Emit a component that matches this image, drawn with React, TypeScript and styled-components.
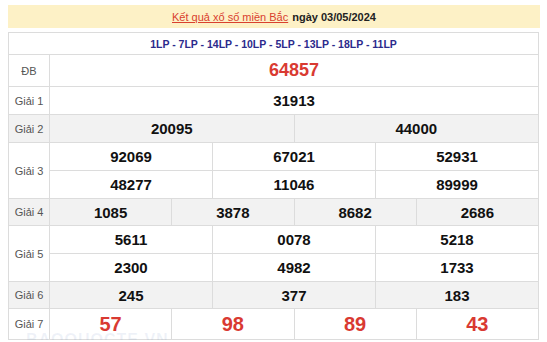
import styled, { createGlobalStyle } from 'styled-components'

const GlobalStyle = createGlobalStyle`
  body {
    margin: 0;
    padding: 5px 7px 0 8px;
    background: #fff;
    font-family: Arial, "Liberation Sans", sans-serif;
    overflow: hidden;
  }
`

const Page = styled.div`
  position: relative;
  display: flex;
  flex-direction: column;
  gap: 4px;
`

const Banner = styled.div`
  height: 23px;
  display: flex;
  align-items: center;
  justify-content: center;
  gap: 4px;
  background: #fdf1c6;
  font-size: 11px;
  color: #111;
`

const BannerLink = styled.a`
  color: #d9402e;
  text-decoration: underline;
`

const BannerDate = styled.span`
  font-weight: 700;
  color: #222;
`

const Table = styled.table`
  width: 531px;
  border-collapse: collapse;
  table-layout: fixed;
  border: 1px solid #d6d6d6;
`

const Row = styled.tr<{ $shade?: boolean; $h?: number }>`
  height: ${(p) => p.$h ?? 28}px;
  background: ${(p) => (p.$shade ? '#f2f2f2' : '#fff')};
`

const Cell = styled.td`
  border: 1px solid #dcdcdc;
  padding: 0;
  text-align: center;
  vertical-align: middle;
`

const Label = styled(Cell)`
  width: 40px;
  font-size: 11px;
  color: #555;
`

const Codes = styled(Cell)`
  font-size: 10.5px;
  font-weight: 700;
  color: #2b2a8c;
`

const Num = styled(Cell)<{ $red?: boolean; $size?: number }>`
  font-size: ${(p) => p.$size ?? 15}px;
  font-weight: 700;
  color: ${(p) => (p.$red ? '#d93a32' : '#111')};
`

const Watermark = styled.div`
  position: absolute;
  left: 18px;
  bottom: -9px;
  font-size: 16px;
  font-weight: 700;
  letter-spacing: 1px;
  color: rgba(120, 150, 200, 0.12);
  pointer-events: none;
`

type Line = { label: string; rows: string[][]; shade?: boolean; red?: boolean; size?: number; h?: number }

const prizes: Line[] = [
  { label: 'ĐB', rows: [['64857']], red: true, size: 18, h: 32 },
  { label: 'Giải 1', rows: [['31913']] },
  { label: 'Giải 2', rows: [['20095', '44000']], shade: true },
  { label: 'Giải 3', rows: [['92069', '67021', '52931'], ['48277', '11046', '89999']], h: 28 },
  { label: 'Giải 4', rows: [['1085', '3878', '8682', '2686']], shade: true, h: 27 },
  { label: 'Giải 5', rows: [['5611', '0078', '5218'], ['2300', '4982', '1733']], h: 28 },
  { label: 'Giải 6', rows: [['245', '377', '183']], shade: true, h: 27 },
  { label: 'Giải 7', rows: [['57', '98', '89', '43']], red: true, size: 20, h: 31 },
]

// 12 equal slots so 1, 2, 3 and 4 columns all share a grid
const span = (n: number) => 12 / n

export default function App() {
  return (
    <Page>
      <GlobalStyle />
      <Banner>
        <BannerLink>Kết quả xổ số miền Bắc</BannerLink>
        <BannerDate>ngày 03/05/2024</BannerDate>
      </Banner>
      <Table>
        <colgroup>
          <col style={{ width: 41 }} />
          {Array.from({ length: 12 }).map((_, i) => (
            <col key={i} />
          ))}
        </colgroup>
        <tbody>
          <Row $h={22}>
            <Codes colSpan={13}>1LP - 7LP - 14LP - 10LP - 5LP - 13LP - 18LP - 11LP</Codes>
          </Row>
          {prizes.map((p) =>
            p.rows.map((nums, ri) => (
              <Row key={p.label + ri} $shade={p.shade} $h={p.h}>
                {ri === 0 && <Label rowSpan={p.rows.length}>{p.label}</Label>}
                {nums.map((n, i) => (
                  <Num key={i} colSpan={span(nums.length)} $red={p.red} $size={p.size}>
                    {n}
                  </Num>
                ))}
              </Row>
            ))
          )}
        </tbody>
      </Table>
      <Watermark>BAOQUOCTE.VN</Watermark>
    </Page>
  )
}
